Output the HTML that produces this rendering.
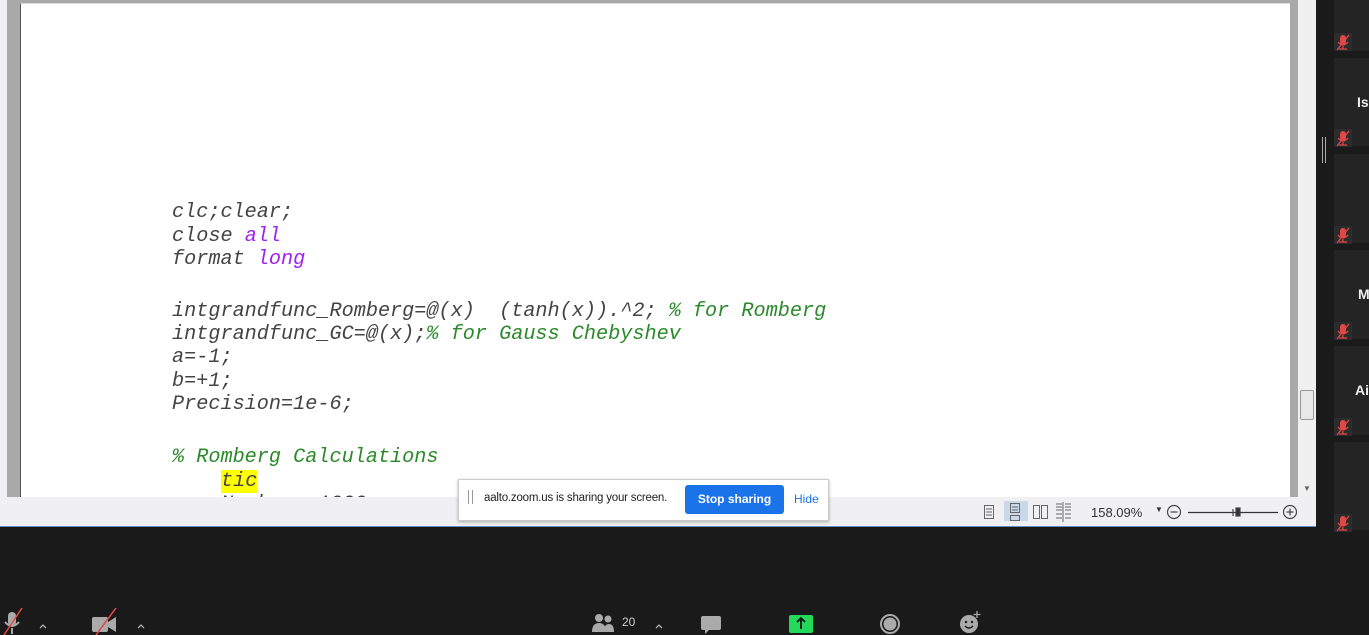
<!DOCTYPE html>
<html><head><meta charset="utf-8">
<style>
*{margin:0;padding:0;box-sizing:border-box}
body{width:1369px;height:635px;background:#1a1a1a;position:relative;overflow:hidden;font-family:"Liberation Sans",sans-serif}
.a{position:absolute}
.code{position:absolute;left:172px;font-family:"Liberation Mono",monospace;font-style:italic;font-size:20.2px;color:#444;white-space:pre;line-height:23px}
.p{color:#a020f0}.g{color:#2a8a2a}
.tile{position:absolute;left:1334px;width:35px;background:#242424}
.mic{position:absolute;left:1334px;width:18px;height:18px;background:#2c2c2c}
.name{position:absolute;color:#eee;font-weight:bold;font-size:14px}
</style></head><body>
<div class="a" style="left:0;top:0;width:7px;height:497px;background:#f0f0f2"></div>
<div class="a" style="left:7px;top:0;width:13px;height:497px;background:#a9a9a9"></div>
<div class="a" style="left:7px;top:0;width:1283px;height:3px;background:#a9a9a9"></div>
<div class="a" style="left:20px;top:3px;width:1270px;height:494px;background:#fff;border-left:1px solid #555;border-top:1px solid #ddd;overflow:hidden">
</div>
<div class="a" style="left:1290px;top:0;width:8px;height:497px;background:#a9a9a9"></div>
<div class="a" style="left:1298px;top:0;width:18px;height:497px;background:#f0f0f0"></div>
<div class="a" style="left:1300px;top:390px;width:14px;height:30px;background:#e8e8e8;border:1px solid #999;border-radius:2px"></div>
<div class="a" style="left:1303px;top:484px;color:#666;font-size:8px">▼</div>
<div class="a" style="left:0;top:0;width:1290px;height:497px;overflow:hidden">
<div class="code" style="top:201px">clc;clear;</div>
<div class="code" style="top:225px">close <span class="p">all</span></div>
<div class="code" style="top:248px">format <span class="p">long</span></div>
<div class="code" style="top:300px">intgrandfunc_Romberg=@(x)  (tanh(x)).^2; <span class="g">% for Romberg</span></div>
<div class="code" style="top:323px">intgrandfunc_GC=@(x);<span class="g">% for Gauss Chebyshev</span></div>
<div class="code" style="top:346px">a=-1;</div>
<div class="code" style="top:370px">b=+1;</div>
<div class="code" style="top:393px">Precision=1e-6;</div>
<div class="code g" style="top:446px">% Romberg Calculations</div>
<div class="code" style="top:470px;left:221px;background:#ffff00;height:23px">tic</div>
<div class="code" style="top:493px;left:221px">Numbers=1000</div>
</div>
<div class="a" style="left:0;top:497px;width:1316px;height:30px;background:#f0f0f2;border-bottom:1px solid #6a8cb8"></div>
<div class="a" style="left:1004px;top:501px;width:24px;height:20px;background:#c9d9ea"></div>
<svg class="a" style="left:980px;top:502px" width="100" height="20" fill="none" stroke="#666" stroke-width="1">
<rect x="4.5" y="3.5" width="9" height="13"/><path d="M6 7h6M6 10h6M6 13h6"/>
<rect x="30.5" y="1.5" width="9" height="9"/><rect x="30.5" y="13.5" width="9" height="5"/><path d="M32 5h6M32 8h6"/>
<rect x="53.5" y="3.5" width="6" height="13"/><rect x="61.5" y="3.5" width="6" height="13"/>
<path d="M76 2h6M76 5h6M76 8h6M76 12h6M76 16h6M85 2h6M85 5h6M85 8h6M85 12h6M85 16h6M83 0v20"/>
</svg>
<div class="a" style="left:1091px;top:505px;font-size:13px;color:#333">158.09%</div>
<div class="a" style="left:1155px;top:505px;font-size:8px;color:#333">▼</div>
<svg class="a" style="left:1164px;top:502px" width="136" height="20" fill="none" stroke="#444" stroke-width="1.2">
<circle cx="10" cy="10" r="6.5"/><path d="M6.5 10h7"/>
<path d="M24 10.5h90" stroke="#333"/><rect x="72" y="6" width="4" height="8" fill="#333"/><path d="M69 7v7"/>
<circle cx="126" cy="10" r="6.5"/><path d="M122.5 10h7M126 6.5v7"/>
</svg>
<div class="a" style="left:458px;top:479px;width:371px;height:42px;background:#fff;border:1px solid #ccc;box-shadow:0 1px 3px rgba(0,0,0,.3)"></div>
<div class="a" style="left:468px;top:490px;width:5px;height:14px;border-left:1px solid #999;border-right:1px solid #999"></div>
<div class="a" style="left:484px;top:492px;font-size:11.5px;color:#222;letter-spacing:-0.2px">aalto.zoom.us is sharing your screen.</div>
<div class="a" style="left:685px;top:485px;width:99px;height:29px;background:#1a73e8;border-radius:3px;color:#fff;font-size:12px;font-weight:bold;text-align:center;line-height:29px">Stop sharing</div>
<div class="a" style="left:794px;top:492px;font-size:12px;color:#1a73e8">Hide</div>
<div class="a" style="left:1316px;top:0;width:53px;height:530px;background:#1a1a1a"></div>
<div class="a" style="left:1322px;top:137px;width:4px;height:26px;border-left:1px solid #aaa;border-right:1px solid #aaa"></div>
<div class="tile" style="top:0;height:51px"></div>
<div class="tile" style="top:58px;height:88px"></div>
<div class="tile" style="top:154px;height:89px"></div>
<div class="tile" style="top:250px;height:89px"></div>
<div class="tile" style="top:346px;height:89px"></div>
<div class="tile" style="top:442px;height:88px"></div>
<div class="name" style="left:1357px;top:94px">Is</div>
<div class="name" style="left:1358px;top:286px">M</div>
<div class="name" style="left:1355px;top:382px">Ai</div>
<svg width="0" height="0" style="position:absolute"><defs><g id="m"><rect x="6" y="2" width="6" height="10" rx="3" fill="#e04848"/><path d="M4 9q5 6 10 0M9 13v3M5 16h8" stroke="#e04848" fill="none" stroke-width="1.3"/><path d="M3 17L15 2" stroke="#e04848" stroke-width="1.3"/></g></defs></svg>
<svg class="mic" style="top:33px"><use href="#m"/></svg>
<svg class="mic" style="top:129px"><use href="#m"/></svg>
<svg class="mic" style="top:226px"><use href="#m"/></svg>
<svg class="mic" style="top:322px"><use href="#m"/></svg>
<svg class="mic" style="top:418px"><use href="#m"/></svg>
<svg class="mic" style="top:514px"><use href="#m"/></svg>
<svg class="a" style="left:0;top:608px" width="160" height="27">
<rect x="8" y="4" width="8" height="14" rx="4" fill="#aaa"/><path d="M5 14q7 8 14 0M12 20v6" stroke="#aaa" fill="none" stroke-width="2"/><path d="M4 27L22 0" stroke="#e04848" stroke-width="1.5"/>
<path d="M40 20l3-3 3 3" stroke="#aaa" fill="none" stroke-width="1.3"/>
<rect x="92" y="9" width="16" height="15" rx="2" fill="#aaa"/><path d="M108 14l8-5v15l-8-5z" fill="#aaa"/><path d="M96 27L116 0" stroke="#e04848" stroke-width="1.5"/>
<path d="M138 20l3-3 3 3" stroke="#aaa" fill="none" stroke-width="1.3"/>
</svg>
<svg class="a" style="left:590px;top:608px" width="400" height="27">
<circle cx="9" cy="10" r="4" fill="#aaa"/><path d="M2 24q0-9 7-9t7 9z" fill="#aaa"/><circle cx="18" cy="11" r="3.5" fill="#aaa"/><path d="M14 24q0-8 5-8t5 8z" fill="#aaa"/>
<text x="32" y="18" fill="#ccc" font-size="12" font-family="Liberation Sans">20</text>
<path d="M66 20l3-3 3 3" stroke="#aaa" fill="none" stroke-width="1.3"/>
<path d="M113 8h16a2 2 0 0 1 2 2v10a2 2 0 0 1-2 2h-10l-4 4v-4h-2a2 2 0 0 1-2-2v-10a2 2 0 0 1 2-2z" fill="#aaa"/>
<rect x="199" y="7" width="24" height="18" rx="2" fill="#23d959"/><path d="M211 21v-10M207 14l4-4 4 4" stroke="#111" stroke-width="1.8" fill="none"/>
<circle cx="300" cy="16" r="9" fill="none" stroke="#aaa" stroke-width="2"/><circle cx="300" cy="16" r="6.5" fill="#aaa"/>
<circle cx="379" cy="16" r="9" fill="#aaa"/><circle cx="376" cy="14" r="1.2" fill="#1a1a1a"/><circle cx="382" cy="14" r="1.2" fill="#1a1a1a"/><path d="M375 18q4 4 8 0" stroke="#1a1a1a" fill="none" stroke-width="1.3"/><path d="M387 3v7M383.5 6.5h7" stroke="#aaa" stroke-width="1.3"/>
</svg>
</body></html>
